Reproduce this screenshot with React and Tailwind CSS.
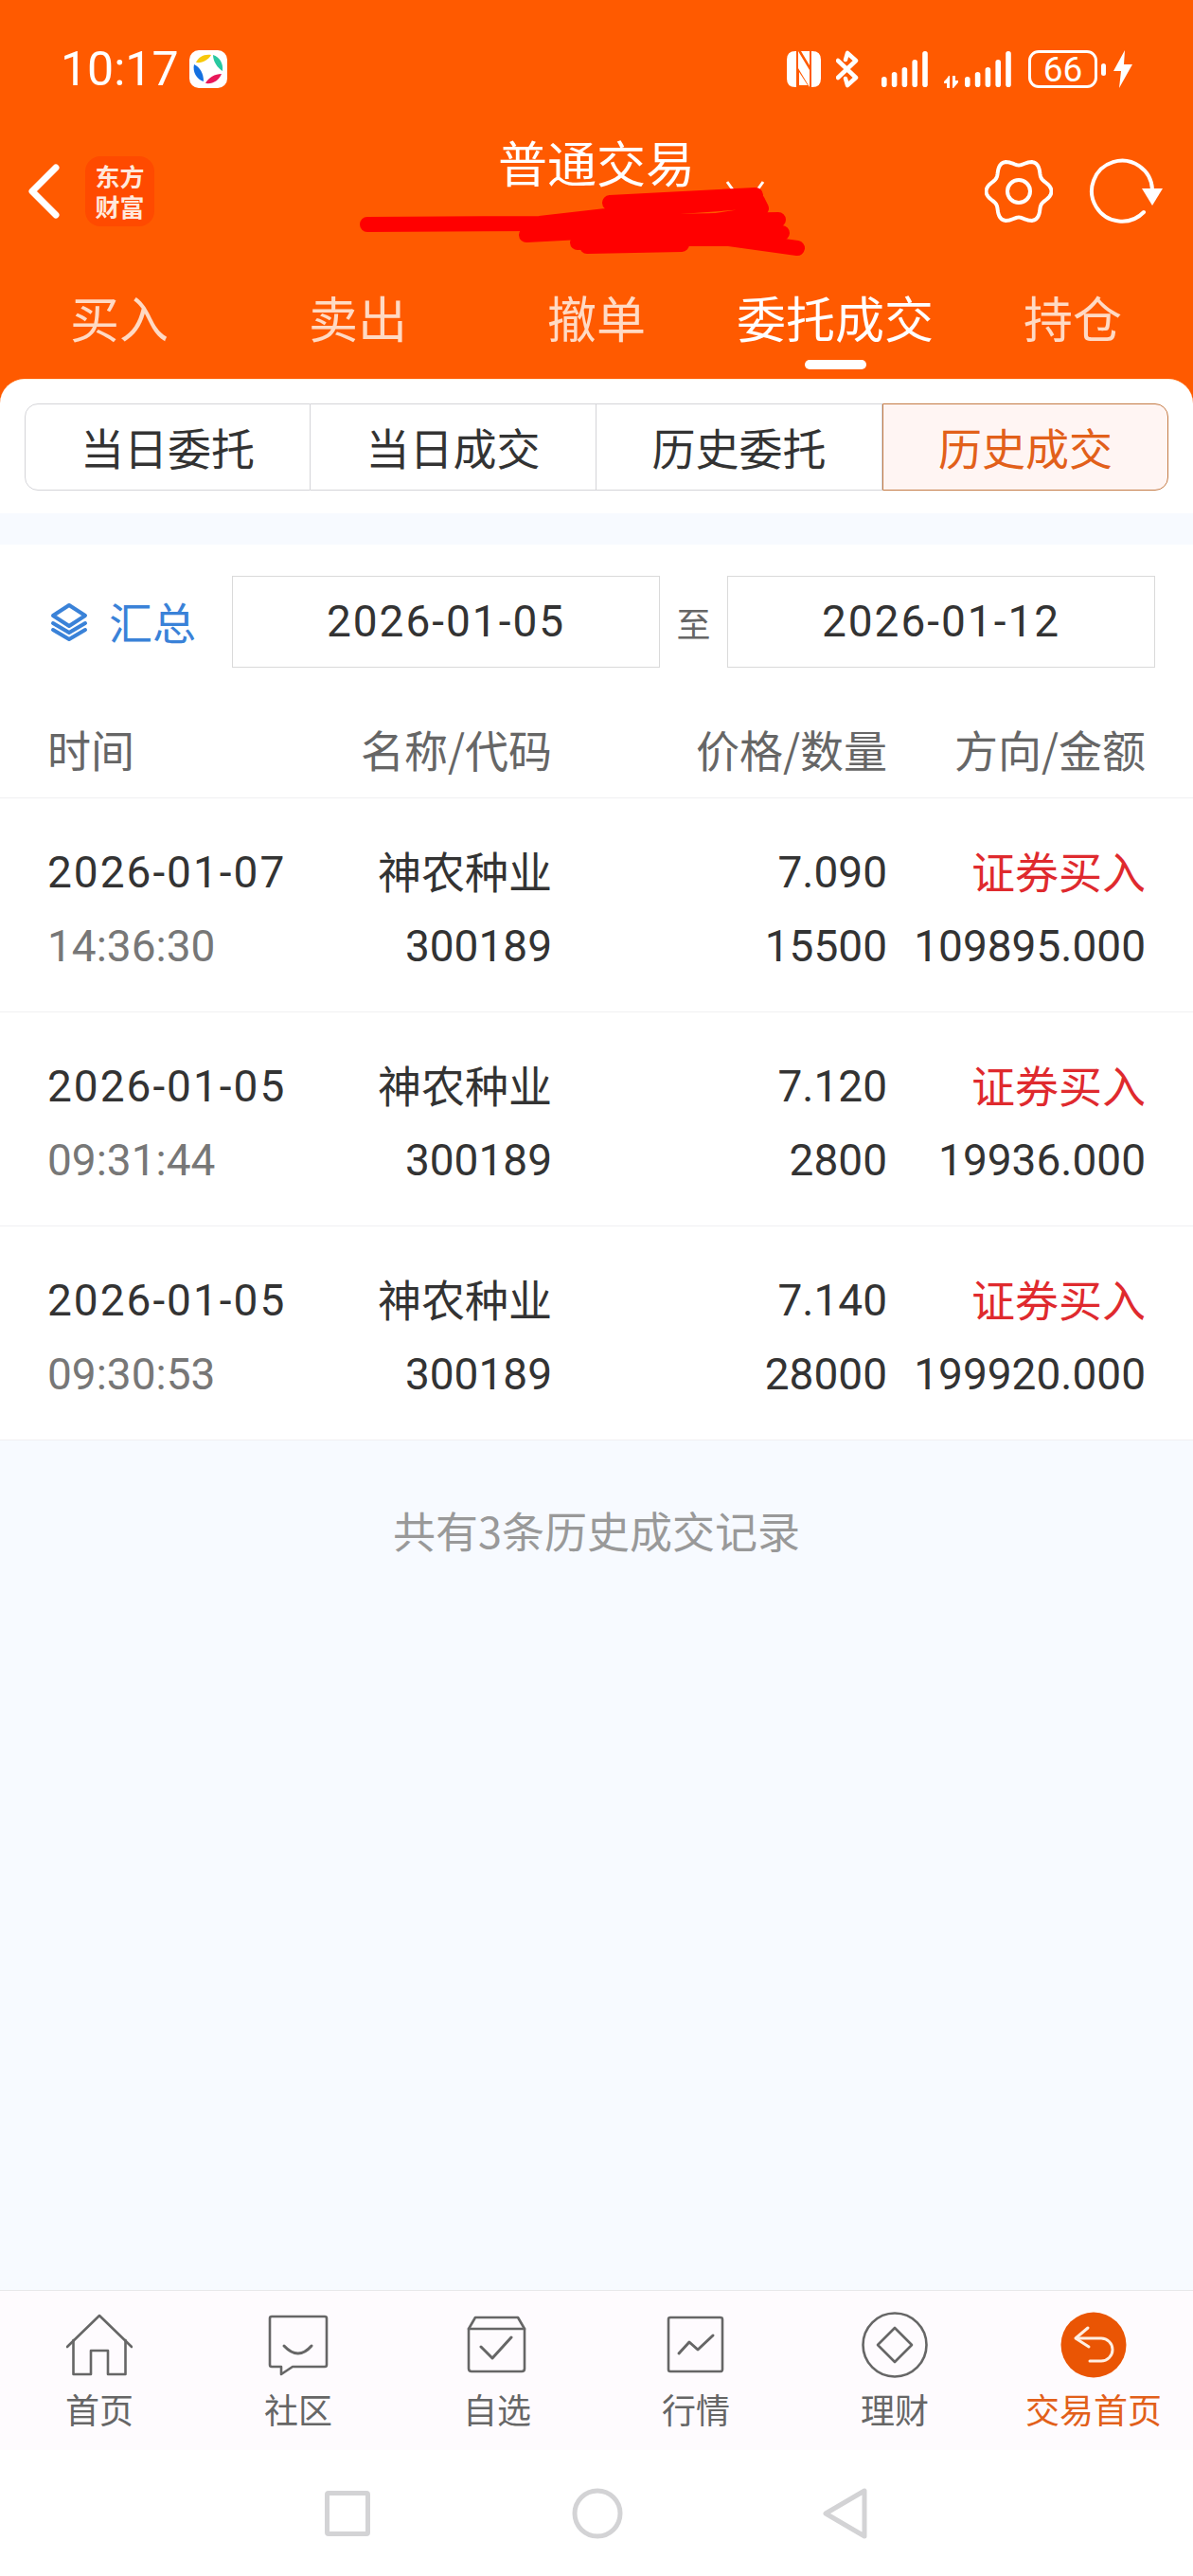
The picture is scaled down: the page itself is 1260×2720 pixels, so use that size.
import React from 'react';

const rows = [
    { date: '2026-01-07', time: '14:36:30', price: '7.090', qty: '15500', amount: '109895.000' },
    { date: '2026-01-05', time: '09:31:44', price: '7.120', qty: '2800', amount: '19936.000' },
    { date: '2026-01-05', time: '09:30:53', price: '7.140', qty: '28000', amount: '199920.000' },
];

// gear outline: six soft lobes
const gearPath = Array.from({ length: 121 }, (_, i) => {
    const a = (i / 120) * Math.PI * 2;
    const r = 31 + 3.5 * Math.cos(6 * a);
    return `${i === 0 ? 'M' : 'L'}${(36 + r * Math.cos(a)).toFixed(2)} ${(35 + r * Math.sin(a)).toFixed(2)}`;
}).join(' ') + 'Z';

const Bars = ({ tops }) => (
    <svg width="50" height="40" viewBox="0 0 50 40">
        {tops.map((t, i) => (
            <rect key={i} x={i * 10.8} y={t} width="5.6" height={39 - t} rx="2.8" fill="#fff" />
        ))}
    </svg>
);

const StatusBar = () => (
    <div className="h-[146px] flex items-center pl-[64px] pr-[64px] text-white">
        <span className="text-[50px] leading-none w-[136px] font-[Roboto,sans-serif]">10:17</span>
        <svg width="40" height="40" viewBox="0 0 40 40">
            <rect width="40" height="40" rx="10" fill="#fff" />
            <path d="M7 13 C10 7 15 4 23 5 C20 10 14 14 7 13Z" fill="#F8C80A" />
            <path d="M25 5 C32 7 36 14 35 22 C30 19 25 12 25 5Z" fill="#28C8A0" />
            <path d="M5 15 C11 18 15 24 15 33 C8 31 3 23 5 15Z" fill="#1470E0" />
            <path d="M17 35 C20 29 27 25 34 25 C31 32 25 36 17 35Z" fill="#E8185A" />
        </svg>
        <div className="ml-auto flex items-center">
            <svg width="36" height="38" viewBox="0 0 36 38">
                <path d="M9 0 H10 L10 38 H9 Q0 38 0 29 V9 Q0 0 9 0Z M26 0 H27 Q36 0 36 9 V29 Q36 38 27 38 H26Z" fill="#fff" />
                <path d="M12 0 L24 20 V38 L12 18Z M13 22 L22 36 H13Z M15 0 H24 V15Z" fill="#fff" />
            </svg>
            <svg className="ml-[16px]" width="24" height="40" viewBox="0 0 24 40" fill="none" stroke="#fff" strokeWidth="4.5" strokeLinejoin="round" strokeLinecap="round">
                <path d="M2 11 L21 29 L12 37 L10 30 M2 29 L21 11 L12 3 L10 10" />
            </svg>
            <div className="ml-[24px]"><Bars tops={[28, 23, 18, 10, 1]} /></div>
            <svg className="ml-[16px] mt-[26px]" width="16" height="13" viewBox="0 0 16 13" fill="#fff">
                <path d="M3 3 L0 6 L0 8 H3 V13 H6 V0 H5Z M9 0 H12 V5 H15 L15 7 L10 13 H9Z" />
            </svg>
            <div className="ml-[6px] w-[50px]"><Bars tops={[28, 23, 18, 10, 1]} /></div>
            <div className="ml-[17px] w-[73px] h-[40px] rounded-[11px] border-[3px] border-white flex items-center justify-center text-[37px] leading-none font-[Roboto,sans-serif]">66</div>
            <div className="ml-[4px] w-[5px] h-[13px] rounded-full bg-white" />
            <svg className="ml-[8px]" width="20" height="40" viewBox="0 0 20 40" fill="#fff">
                <path d="M12 0 L0 22 H8 L6 40 L20 15 H11Z" />
            </svg>
        </div>
    </div>
);

const TitleBar = () => (
    <div className="relative h-[112px] flex items-center text-white">
        <div className="w-[420px] flex items-center pl-[30px]">
            <svg width="33" height="58" viewBox="0 0 33 58" fill="none" stroke="#fff" strokeWidth="7" strokeLinecap="round" strokeLinejoin="round">
                <path d="M29 4 L4 29 L29 54" />
            </svg>
            <div className="ml-[27px] w-[73px] h-[74px] rounded-[16px] bg-[#FF4A00] flex items-center justify-center text-center text-[26px] leading-[32px] font-bold text-[#FFE8DC] font-['Noto_Sans_CJK_SC',sans-serif]">
                <div>东方<br />财富</div>
            </div>
        </div>
        <div className="flex-1 text-center text-[52px] leading-none pb-[62px] font-['Noto_Sans_CJK_SC',sans-serif]">普通交易</div>
        <div className="w-[420px] flex items-center pl-[200px]">
            <svg width="72" height="70" viewBox="0 0 72 70" fill="none" stroke="#fff" strokeWidth="4">
                <path d={gearPath} strokeLinejoin="round" />
                <circle cx="36" cy="35" r="12" />
            </svg>
            <svg className="ml-[38px]" width="78" height="70" viewBox="0 0 78 70" fill="none">
                <path d="M67 33 A32 32 0 1 0 58 57" stroke="#fff" strokeWidth="4" strokeLinecap="round" />
                <path d="M56 32 H78 L67 50Z" fill="#fff" />
            </svg>
        </div>
        {/* dropdown arrow half hidden by the scribble */}
        <svg className="absolute left-[766px] top-[44px]" width="42" height="20" viewBox="0 0 42 20" fill="none" stroke="#fff" strokeWidth="3">
            <path d="M2 2 L12 16 M40 2 L30 16" />
        </svg>
        {/* hand drawn redaction */}
        <svg className="absolute left-[370px] top-[44px]" width="490" height="90" viewBox="0 0 490 90" fill="none" stroke="#FF0000" strokeWidth="16" strokeLinecap="round" strokeLinejoin="round">
            <path d="M18 47 L200 46 L270 38 L320 30 L430 22 L434 30 L420 38 L380 44 L270 50" />
            <path d="M274 24 L428 16" />
            <path d="M190 56 L330 44 L452 42" />
            <path d="M186 58 L300 52 L456 56" />
            <path d="M240 66 L320 62 L400 62 L472 72" />
            <path d="M250 70 L350 68" />
        </svg>
    </div>
);

const tabs = ['买入', '卖出', '撤单', '委托成交', '持仓'];

const TabBar = () => (
    <div className="h-[142px] pt-[52px] grid grid-cols-[252px_252px_252px_252px_250px] text-[52px] leading-[50px] font-['Noto_Sans_CJK_SC',sans-serif]">
        {tabs.map((t) => (
            <div key={t} className={`relative text-center ${t === '委托成交' ? 'text-white' : 'text-[#FFDAC4]'}`}>
                {t}
                {t === '委托成交' && <div className="absolute left-[94px] top-[70px] w-[65px] h-[10px] rounded-full bg-white" />}
            </div>
        ))}
    </div>
);

const segments = ['当日委托', '当日成交', '历史委托', '历史成交'];

const Segments = () => (
    <div className="h-[142px] pt-[25px] px-[26px] bg-white rounded-t-[26px] border-t border-[#FFF0DC]">
        <div className="grid grid-cols-4 h-[92px] text-[46px] text-[#333] font-['Noto_Sans_CJK_SC',sans-serif]">
            {segments.map((s, i) => (
                <div
                    key={s}
                    className={`flex items-center justify-center pb-[2px] border-y ${i === 0 ? 'border-l rounded-l-[14px]' : ''} ${i === 3 ? 'border border-[#C47A44] rounded-r-[14px] bg-[#FFF5F3] text-[#E2601A]' : 'border-r border-[#D4D4D8]'}`}
                >
                    {s}
                </div>
            ))}
        </div>
    </div>
);

const Filter = () => (
    <div className="h-[130px] pt-[33px] flex items-start font-[Roboto,'Noto_Sans_CJK_SC',sans-serif]">
        <div className="w-[245px] h-[97px] pl-[53px] flex items-center text-[#3A82D8]">
            <svg width="40" height="42" viewBox="0 0 40 42" fill="none" stroke="#3A82D8" strokeWidth="4" strokeLinejoin="round" strokeLinecap="round">
                <path d="M20 3 L37 14 L20 25 L3 14Z" />
                <path d="M3 22 L20 32 L37 22" />
                <path d="M3 29 L20 39 L37 29" />
            </svg>
            <span className="ml-[22px] mb-[3px] text-[46px] leading-none font-['Noto_Sans_CJK_SC',sans-serif]">汇总</span>
        </div>
        <div className="w-[452px] h-[97px] border border-[#DADADA] flex items-center justify-center text-[46px] tracking-[2px] text-[#333]">2026-01-05</div>
        <div className="w-[71px] h-[97px] flex items-center justify-center text-[36px] text-[#666] font-['Noto_Sans_CJK_SC',sans-serif]">至</div>
        <div className="w-[452px] h-[97px] border border-[#DADADA] flex items-center justify-center text-[46px] tracking-[2px] text-[#333]">2026-01-12</div>
    </div>
);

const COLS = 'grid grid-cols-[300px_233px_354px_273px] pl-[50px] text-right';

const TableHead = () => (
    <div className={`${COLS} h-[138px] pt-[61px] border-b border-[#F0F0F2] text-[46px] leading-[48px] text-[#666] font-['Noto_Sans_CJK_SC',sans-serif]`}>
        <div className="text-left">时间</div>
        <div>名称/代码</div>
        <div>价格/数量</div>
        <div>方向/金额</div>
    </div>
);

const Row = ({ row }) => (
    <div className={`${COLS} h-[226px] pt-[54px] border-b border-[#F0F0F2] text-[46px] leading-[48px] text-[#333] font-[Roboto,'Noto_Sans_CJK_SC',sans-serif]`}>
        <div className="text-left">
            <div className="tracking-[2px]">{row.date}</div>
            <div className="mt-[30px] text-[#777]">{row.time}</div>
        </div>
        <div>
            <div className="-mt-[3px] font-['Noto_Sans_CJK_SC',sans-serif]">神农种业</div>
            <div className="mt-[33px]">300189</div>
        </div>
        <div>
            <div>{row.price}</div>
            <div className="mt-[30px]">{row.qty}</div>
        </div>
        <div>
            <div className="-mt-[3px] text-[#DF2A2E] font-['Noto_Sans_CJK_SC',sans-serif]">证券买入</div>
            <div className="mt-[33px]">{row.amount}</div>
        </div>
    </div>
);

const Icon = ({ children }) => (
    <svg width="70" height="70" viewBox="0 0 70 70" fill="none" stroke="#666" strokeWidth="2.6" strokeLinejoin="round" strokeLinecap="round">
        {children}
    </svg>
);

const navItems = [
    {
        label: '首页',
        icon: (
            <Icon>
                <path d="M1 37 L35 4 L69 37" />
                <path d="M7.5 30 V66 H26 V41 H44 V66 H62.5 V30" />
            </Icon>
        ),
    },
    {
        label: '社区',
        icon: (
            <Icon>
                <path d="M7 5 H63 Q65 5 65 7 V56 Q65 58 63 58 H29 L17 66 V58 H7 Q5 58 5 56 V7 Q5 5 7 5Z" />
                <path d="M20 36 Q35 52 49 36" strokeWidth="3" />
            </Icon>
        ),
    },
    {
        label: '自选',
        icon: (
            <Icon>
                <path d="M5 18 L12 6 H57 L64 18 V60 Q64 63 61 63 H8 Q5 63 5 60Z" />
                <path d="M5 18 H64" />
                <path d="M18 37 L30 49 L50 27" strokeWidth="3" />
            </Icon>
        ),
    },
    {
        label: '行情',
        icon: (
            <Icon>
                <rect x="6" y="6" width="57" height="57" rx="2" />
                <path d="M17 44 L28 32 L37 40 L53 25" strokeWidth="3" />
            </Icon>
        ),
    },
    {
        label: '理财',
        icon: (
            <Icon>
                <circle cx="35" cy="35" r="33.5" />
                <path d="M35 17 L53 35 L35 53 L17 35Z" />
            </Icon>
        ),
    },
    {
        label: '交易首页',
        active: true,
        icon: (
            <svg width="70" height="70" viewBox="0 0 70 70" fill="none" stroke="#FFEFE2" strokeWidth="3" strokeLinecap="round" strokeLinejoin="round">
                <circle cx="35" cy="35" r="34.5" fill="#EA5504" stroke="none" />
                <path d="M29 17 L16 28 L30 37" />
                <path d="M17 28 H43 A12 12 0 0 1 43 52 H31" />
            </svg>
        ),
    },
];

const BottomNav = () => (
    <div className="h-[169px] grid grid-cols-6 border-t border-[#E8E8EA] bg-[#FEFBFE] font-['Noto_Sans_CJK_SC',sans-serif]">
        {navItems.map((n) => (
            <div key={n.label} className="flex flex-col items-center pt-[22px]">
                {n.icon}
                <span className={`mt-[15px] text-[36px] leading-[35px] ${n.active ? 'text-[#E2601A]' : 'text-[#666]'}`}>{n.label}</span>
            </div>
        ))}
    </div>
);

const SystemNav = () => (
    <div className="h-[133px] bg-white flex items-center justify-center">
        <div className="w-[48px] h-[48px] border-[5px] border-[#D3D3D5] rounded-[4px]" />
        <svg className="ml-[213px]" width="54" height="54" viewBox="0 0 54 54" fill="none" stroke="#D3D3D5" strokeWidth="5">
            <circle cx="27" cy="27" r="24" />
        </svg>
        <svg className="ml-[211px]" width="48" height="54" viewBox="0 0 48 54" fill="none" stroke="#D3D3D5" strokeWidth="5" strokeLinejoin="round">
            <path d="M44 3 V51 L3 27Z" />
        </svg>
    </div>
);

export default function App() {
    return (
        <div className="w-[1260px] h-[2720px] flex flex-col bg-[#F7FAFF] overflow-hidden">
            <div className="bg-[#FF5A00]">
                <StatusBar />
                <TitleBar />
                <TabBar />
                <Segments />
            </div>
            <div className="h-[33px]" />
            <div className="bg-white">
                <Filter />
                <TableHead />
                {rows.map((r) => (
                    <Row key={r.time} row={r} />
                ))}
            </div>
            <div className="flex-1 pt-[71px] text-center text-[45px] leading-[48px] text-[#999] font-['Noto_Sans_CJK_SC',sans-serif]">共有3条历史成交记录</div>
            <BottomNav />
            <SystemNav />
        </div>
    );
}
